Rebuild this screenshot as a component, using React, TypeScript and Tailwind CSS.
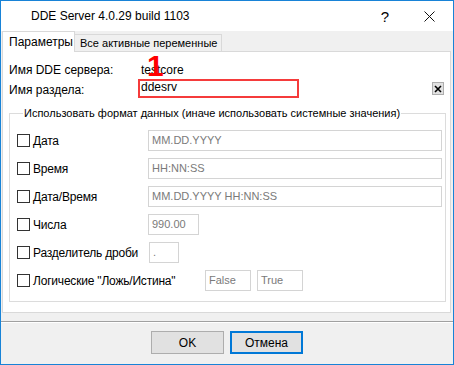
import React from "react";

const inputCls =
  "h-[21px] border border-[#d4d4d4] bg-white pl-[3px] text-[11px] leading-[19px] text-[#7a7a7a] whitespace-nowrap";

function Check({ label }: { label: string }) {
  return (
    <span className="flex items-center">
      <span className="h-[13px] w-[13px] border border-[#333333] bg-white" />
      <span className="ml-[3px] whitespace-nowrap text-[12px] tracking-[-0.2px] text-black">{label}</span>
    </span>
  );
}

function FormatRow({ label, children }: { label: string; children: React.ReactNode }) {
  return (
    <div className="flex h-[21px] items-center">
      <div className="w-[131px]">
        <Check label={label} />
      </div>
      {children}
    </div>
  );
}

export default function App() {
  return (
    <div className="flex h-[365px] w-[454px] flex-col border border-[#1883d7] bg-[#f0f0f0] font-['Liberation_Sans',Arial,sans-serif] text-black">
      {/* title bar */}
      <div className="flex h-[30px] items-center bg-white">
        <span className="ml-[30px] text-[12px]">DDE Server 4.0.29 build 1103</span>
        <span className="ml-auto text-[15px] leading-none">?</span>
        <svg className="ml-[35px] mr-[18px]" width="11" height="11" viewBox="0 0 11 11">
          <path d="M0.5 0.5 L10.5 10.5 M10.5 0.5 L0.5 10.5" stroke="#111" strokeWidth="1" />
        </svg>
      </div>

      {/* tabs */}
      <div className="flex h-[20px] items-end pl-[1px]">
        <div className="relative z-10 -mb-px flex h-[21px] w-[73px] items-center whitespace-nowrap border-x border-t border-[#d9d9d9] bg-white pl-[6px] text-[12px]">
          Параметры
        </div>
        <div className="flex h-[17px] w-[147px] items-center whitespace-nowrap border-t border-r border-[#d9d9d9] bg-[#f0f0f0] pl-[5px] text-[11px]">
          Все активные переменные
        </div>
      </div>

      {/* panel */}
      <div className="ml-[1px] w-[449px] border border-[#d9d9d9] bg-white pb-[10px]">
        <div className="relative mt-[11px] flex h-[14px] items-center pl-[6px] text-[12px]">
          <span className="w-[132px]">Имя DDE сервера:</span>
          <span>testcore</span>
          <span className="absolute left-[144px] top-[-12px] text-[30px] font-bold leading-none text-[#ff0000]">1</span>
        </div>
        <div className="mt-[2px] flex h-[19px] pl-[6px] text-[12px]">
          <span className="flex w-[129px] items-center pt-[2px]">Имя раздела:</span>
          <div className="flex h-[19px] w-[161px] items-center border-2 border-[#f53b3b] pl-[1px] leading-none">
            <span className="-mt-[3px]">ddesrv</span>
          </div>
          <div className="mr-[6px] ml-auto mt-[3px] flex h-[13px] w-[12px] items-center justify-center border border-[#adadad] bg-[#e1e1e1]">
            <svg width="8" height="8" viewBox="0 0 8 8">
              <path d="M1 1 L7 7 M7 1 L1 7" stroke="#000" strokeWidth="1.6" />
            </svg>
          </div>
        </div>

        <fieldset className="mt-[8px] ml-[6px] w-[437px] border border-[#dcdcdc] pb-[10px] pl-[7px]">
          <legend className="ml-[6px] px-[1px] text-[11px] leading-[14px]">
            Использовать формат данных (иначе использовать системные значения)
          </legend>
          <div className="mt-[10px] flex flex-col gap-[7px]">
            <FormatRow label="Дата">
              <div className={`${inputCls} w-[294px]`}>MM.DD.YYYY</div>
            </FormatRow>
            <FormatRow label="Время">
              <div className={`${inputCls} w-[294px]`}>HH:NN:SS</div>
            </FormatRow>
            <FormatRow label="Дата/Время">
              <div className={`${inputCls} w-[294px]`}>MM.DD.YYYY HH:NN:SS</div>
            </FormatRow>
            <FormatRow label="Числа">
              <div className={`${inputCls} w-[51px]`}>990.00</div>
            </FormatRow>
            <FormatRow label="Разделитель дроби">
              <div className={`${inputCls} ml-[1px] w-[30px]`}>.</div>
            </FormatRow>
            <div className="flex h-[21px] items-center">
              <div className="w-[188px]">
                <Check label={'Логические "Ложь/Истина"'} />
              </div>
              <div className={`${inputCls} w-[46px]`}>False</div>
              <div className={`${inputCls} ml-[6px] w-[46px]`}>True</div>
            </div>
          </div>
        </fieldset>
      </div>

      {/* footer */}
      <div className="mt-[8px] border-t border-b border-t-[#a0a0a0] border-b-white" />
      <div className="mt-[8px] flex justify-center gap-[6px]">
        <button className="h-[23px] w-[73px] border border-[#adadad] bg-[#e1e1e1] text-[12px]">OK</button>
        <button className="h-[23px] w-[73px] border-2 border-[#0078d7] bg-[#e1e1e1] text-[12px]">Отмена</button>
      </div>
    </div>
  );
}
